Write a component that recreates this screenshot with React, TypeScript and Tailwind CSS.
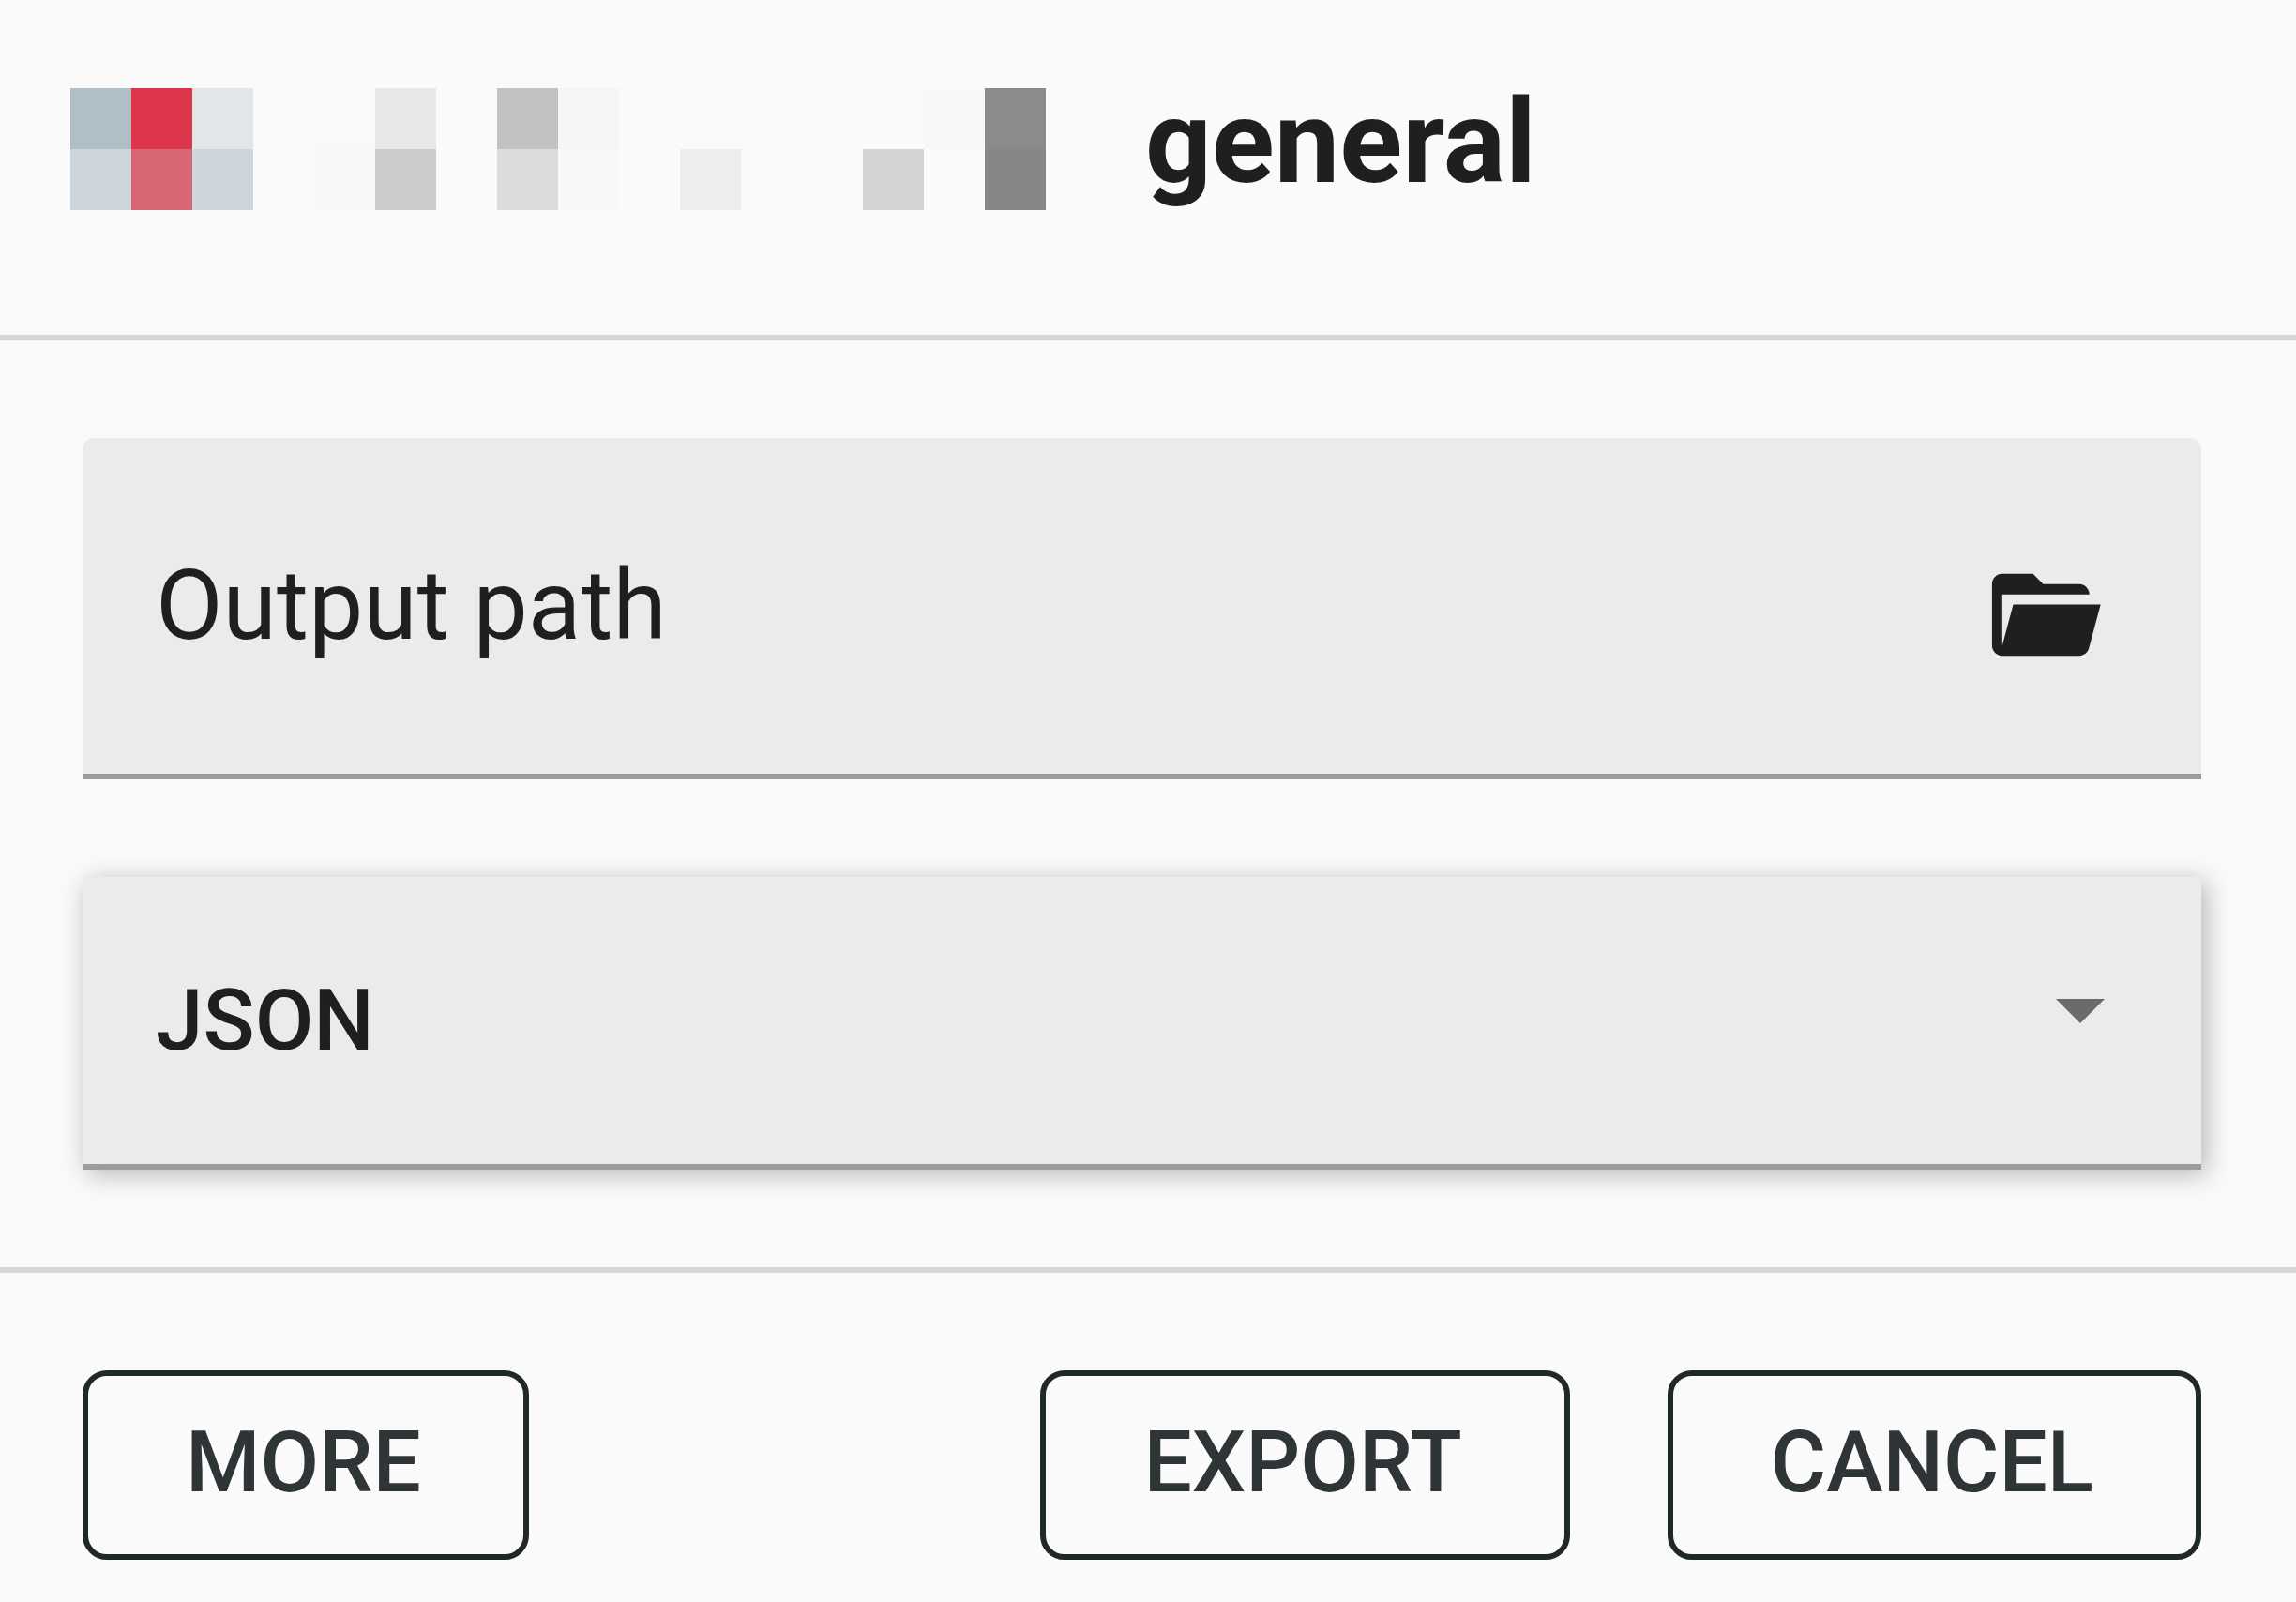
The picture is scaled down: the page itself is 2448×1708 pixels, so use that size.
import { useState } from "react";

type Cell = { col: number; row: number; fill: string };

const CELL = 65;

const cells: Cell[] = [
  { col: 1, row: 0, fill: "#f9f9f9" },
  { col: 2, row: 0, fill: "#f9f9f9" },
  { col: 0, row: 1, fill: "#b0bec7" },
  { col: 1, row: 1, fill: "#dd3549" },
  { col: 2, row: 1, fill: "#e0e6ea" },
  { col: 4, row: 1, fill: "#f9f9f9" },
  { col: 5, row: 1, fill: "#e7e7e7" },
  { col: 7, row: 1, fill: "#c2c2c2" },
  { col: 8, row: 1, fill: "#f5f5f5" },
  { col: 11, row: 1, fill: "#f9f9f9" },
  { col: 14, row: 1, fill: "#f8f8f8" },
  { col: 15, row: 1, fill: "#8b8b8b" },
  { col: 0, row: 2, fill: "#ccd6dc" },
  { col: 1, row: 2, fill: "#d66673" },
  { col: 2, row: 2, fill: "#ccd6dc" },
  { col: 4, row: 2, fill: "#f8f8f8" },
  { col: 5, row: 2, fill: "#cccccc" },
  { col: 7, row: 2, fill: "#dcdcdc" },
  { col: 8, row: 2, fill: "#f8f8f8" },
  { col: 10, row: 2, fill: "#eeeeee" },
  { col: 11, row: 2, fill: "#f9f9f9" },
  { col: 13, row: 2, fill: "#d4d4d4" },
  { col: 15, row: 2, fill: "#868686" },
];

const formats = ["JSON", "CSV", "TXT", "HTML"];

const Mosaic = () => (
  <svg
    className="h-[195px] w-[1040px] shrink-0"
    viewBox="0 0 1040 195"
    shapeRendering="crispEdges"
    aria-hidden="true"
  >
    {cells.map((cell) => (
      <rect
        key={`${cell.col}-${cell.row}`}
        x={cell.col * CELL}
        y={cell.row * CELL}
        width={CELL}
        height={CELL}
        fill={cell.fill}
      />
    ))}
  </svg>
);

const FolderOpenIcon = () => (
  <svg className="size-[131px]" viewBox="0 0 24 24" fill="currentColor" aria-hidden="true">
    <path d="M19,20H4C2.89,20 2,19.1 2,18V6C2,4.89 2.89,4 4,4H10L12,6H19A2,2 0 0,1 21,8H21L4,8V18L6.14,10H23.21L20.93,18.5C20.7,19.37 19.92,20 19,20Z" />
  </svg>
);

const OutlinedButton = ({ text, onClick }: { text: string; onClick?: () => void }) => (
  <button
    type="button"
    onClick={onClick}
    className="rounded-[26px] border-6 border-[#20282a] pt-[38px] pr-[109px] pb-[44px] pl-[104px] text-[91px] leading-[108px] font-medium text-[#2f3537]"
  >
    {text}
  </button>
);

const App = () => {
  const [path, setPath] = useState("");
  const [format, setFormat] = useState("JSON");

  return (
    <div className="min-h-screen bg-[#fafafa] font-['Roboto',sans-serif] text-[#1f1f1f]">
      <header className="flex items-end gap-[106px] border-b-6 border-[#d7d7d7] pt-[29px] pb-[133px] pl-[75px]">
        <Mosaic />
        <h1 className="text-[124px] leading-[144px] font-bold">general</h1>
      </header>

      <main className="flex flex-col gap-[104px] border-b-6 border-[#d7d7d7] py-[104px] pr-[101px] pl-[88px]">
        <div className="relative flex h-[364px] items-center rounded-t-xl border-b-6 border-[#9c9c9c] bg-[#ebebeb] pt-[18px] pr-[103px] pl-[78px]">
          <input
            id="output-path"
            type="text"
            value={path}
            onChange={(e) => setPath(e.target.value)}
            className="min-w-0 flex-1 bg-transparent text-[104px] outline-none"
          />
          {path === "" && (
            <label
              htmlFor="output-path"
              className="absolute inset-y-0 left-[78px] flex items-center text-[104px] leading-none"
            >
              Output path
            </label>
          )}
          <button type="button" aria-label="Browse">
            <FolderOpenIcon />
          </button>
        </div>

        <div className="relative border-b-6 border-[#9c9c9c] bg-[#ebebeb] shadow-[5px_5px_26px_rgba(0,0,0,0.28)]">
          <select
            aria-label="Format"
            value={format}
            onChange={(e) => setFormat(e.target.value)}
            className="block h-[306px] w-full appearance-none bg-transparent px-[78px] text-[91px] font-medium outline-none"
          >
            {formats.map((item) => (
              <option key={item} value={item}>
                {item}
              </option>
            ))}
          </select>
          <div className="pointer-events-none absolute inset-y-0 right-[103px] flex items-center pb-5">
            <svg className="h-[26px] w-[52px]" viewBox="0 0 10 5" fill="#6b6b6b" aria-hidden="true">
              <path d="M0 0l5 5 5-5z" />
            </svg>
          </div>
        </div>
      </main>

      <footer className="flex gap-[104px] pt-[104px] pr-[101px] pl-[88px]">
        <div className="flex-1">
          <OutlinedButton text="MORE" />
        </div>
        <OutlinedButton text="EXPORT" />
        <OutlinedButton text="CANCEL" onClick={() => setPath("")} />
      </footer>
    </div>
  );
};

export default App;
